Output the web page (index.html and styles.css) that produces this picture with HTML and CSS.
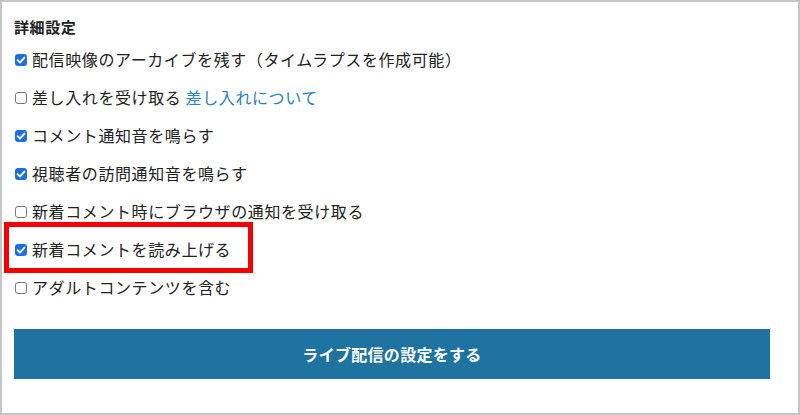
FILE: index.html
```html
<!DOCTYPE html>
<html lang="ja">
<head>
<meta charset="utf-8">
<title>詳細設定</title>
<link rel="stylesheet" href="styles.css">
</head>
<body>
<div class="frame">
  <h2 class="title">詳細設定</h2>
  <div class="options">
    <label class="row"><span class="cb on"><svg viewBox="0 0 12 12" width="12" height="12"><path d="M2.6 6.2 L5 8.6 L9.4 3.6" fill="none" stroke="#fff" stroke-width="1.9" stroke-linecap="round" stroke-linejoin="round"/></svg></span><span class="txt">配信映像のアーカイブを残す（タイムラプスを作成可能）</span></label>
    <label class="row"><span class="cb"></span><span class="txt">差し入れを受け取る <a class="link" href="#">差し入れについて</a></span></label>
    <label class="row"><span class="cb on"><svg viewBox="0 0 12 12" width="12" height="12"><path d="M2.6 6.2 L5 8.6 L9.4 3.6" fill="none" stroke="#fff" stroke-width="1.9" stroke-linecap="round" stroke-linejoin="round"/></svg></span><span class="txt">コメント通知音を鳴らす</span></label>
    <label class="row"><span class="cb on"><svg viewBox="0 0 12 12" width="12" height="12"><path d="M2.6 6.2 L5 8.6 L9.4 3.6" fill="none" stroke="#fff" stroke-width="1.9" stroke-linecap="round" stroke-linejoin="round"/></svg></span><span class="txt">視聴者の訪問通知音を鳴らす</span></label>
    <label class="row"><span class="cb"></span><span class="txt">新着コメント時にブラウザの通知を受け取る</span></label>
    <label class="row marked"><span class="cb on"><svg viewBox="0 0 12 12" width="12" height="12"><path d="M2.6 6.2 L5 8.6 L9.4 3.6" fill="none" stroke="#fff" stroke-width="1.9" stroke-linecap="round" stroke-linejoin="round"/></svg></span><span class="txt">新着コメントを読み上げる</span></label>
    <label class="row"><span class="cb"></span><span class="txt">アダルトコンテンツを含む</span></label>
  </div>
  <button class="submit" type="button">ライブ配信の設定をする</button>
</div>
</body>
</html>
```
FILE: styles.css
```css
*, *::before, *::after { box-sizing: border-box; }
html, body { margin: 0; padding: 0; background: #fff; }
body {
  font-family: "Noto Sans CJK JP", "Noto Sans", sans-serif;
  color: #222;
}
.frame {
  width: 800px;
  height: 415px;
  border: 2px solid #c6c6c6;
  padding: 14px 28px 0 12px;
  overflow: hidden;
}
.title {
  margin: 0 0 2px 0;
  font-size: 15px;
  line-height: 22px;
  font-weight: 700;
  letter-spacing: 0.6px;
}
.options { display: flex; flex-direction: column; }
.row {
  display: flex;
  align-items: center;
  height: 38px;
  font-size: 16px;
  letter-spacing: 0.6px;
  position: relative;
}
.cb {
  width: 12px;
  height: 12px;
  margin: 1px 5px 0 1px;
  border: 1px solid #7a7a7a;
  border-radius: 3px;
  background: #fff;
  flex: none;
  display: flex;
  align-items: center;
  justify-content: center;
}
.cb.on {
  border: none;
  background: #1b6fe4;
}
.cb svg { display: block; }
.txt { white-space: nowrap; }
.link { color: #2a82bf; text-decoration: none; }
.row.marked::after {
  content: "";
  position: absolute;
  left: -10px;
  top: -8px;
  bottom: -5px;
  width: 249px;
  border: 5px solid #f50000;
  pointer-events: none;
}
.submit {
  display: block;
  width: 756px;
  height: 50px;
  margin: 23px 0 0 0;
  border: none;
  background: #1f73a1;
  color: #fff;
  font-family: "Noto Sans CJK JP", "Noto Sans", sans-serif;
  font-size: 16px;
  font-weight: 700;
  letter-spacing: 0.3px;
  padding: 0;
}
```
